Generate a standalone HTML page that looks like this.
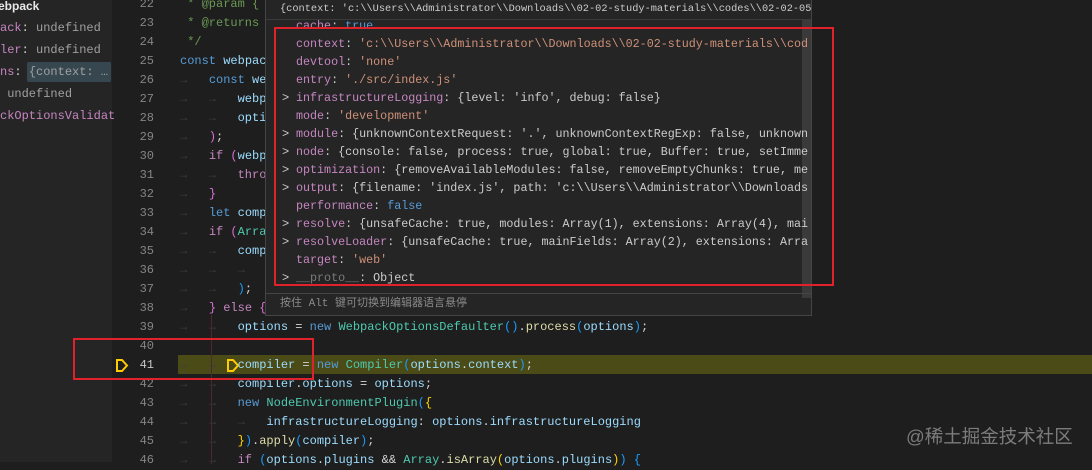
<!DOCTYPE html>
<html><head><meta charset="utf-8"><style>
*{margin:0;padding:0;box-sizing:border-box}
body{width:1092px;height:462px;background:#1e1e1e;overflow:hidden;position:relative;font-family:"Liberation Mono",monospace;font-size:12px;color:#d4d4d4}
.sb{position:absolute;left:0;top:0;width:112px;height:462px;background:#252526}
.sl{position:absolute;left:0;white-space:pre;font-family:"Liberation Mono",monospace;font-size:12px;line-height:20px}
.ln{position:absolute;left:112px;width:42px;text-align:right;color:#858585;line-height:19px;font-size:12px}
.cl{position:absolute;left:180px;white-space:pre;line-height:19px;font-size:12px}
.k{color:#569cd6}.c{color:#c586c0}.v{color:#9cdcfe}.t{color:#4ec9b0}.f{color:#dcdcaa}.g{color:#6a9955}.y{color:#ffd700}.p{color:#da70d6}.b{color:#179fff}.a{color:#3e3e3e}
.pop{position:absolute;left:265px;top:0;width:547px;height:316px;background:#252526;border:1px solid #454545;border-top:none;overflow:hidden}
.pl{position:absolute;left:30px;white-space:pre;font-size:11.7px;line-height:18px;color:#cccccc}
.pk{color:#c586c0}.ps{color:#ce9178}.pb{color:#569cd6}
.chev{position:absolute;left:16px;color:#cccccc;font-size:12px;line-height:18px}
.red{position:absolute;border:2px solid #e0232b}
.code{position:absolute;left:0;top:2px;width:1092px;height:462px}
</style></head><body>
<div class="sb">
<div class="sl" style="top:-4px;left:-2px;color:#e8e8e8;font-family:'Liberation Sans',sans-serif;font-weight:bold;font-size:12px">ebpack</div>
<div class="sl" style="top:18px"><span class="pk">ack</span>: <span style="color:#a0a0a0">undefined</span></div>
<div class="sl" style="top:40px"><span class="pk">ler</span>: <span style="color:#a0a0a0">undefined</span></div>
<div style="position:absolute;left:27px;top:62px;width:84px;height:20px;background:#37474f;border-radius:2px"></div>
<div class="sl" style="top:62px"><span class="pk">ns</span>: <span style="color:#a0a0a0">{context: …</span></div>
<div class="sl" style="top:84px"> <span style="color:#a0a0a0">undefined</span></div>
<div class="sl" style="top:106px"><span class="pk">ckOptionsValidat</span></div>
</div>
<div class="code">
<div style="position:absolute;left:178px;top:353px;width:914px;height:19px;background:#4b4b18"></div>
<div style="position:absolute;left:211px;top:313px;width:1px;height:149px;background:#4a2a2a"></div>

<div class="ln" style="top:-7px">22</div><div class="ln" style="top:12px">23</div><div class="ln" style="top:31px">24</div><div class="ln" style="top:50px">25</div><div class="ln" style="top:69px">26</div><div class="ln" style="top:88px">27</div><div class="ln" style="top:107px">28</div><div class="ln" style="top:126px">29</div><div class="ln" style="top:145px">30</div><div class="ln" style="top:164px">31</div><div class="ln" style="top:183px">32</div><div class="ln" style="top:202px">33</div><div class="ln" style="top:221px">34</div><div class="ln" style="top:240px">35</div><div class="ln" style="top:259px">36</div><div class="ln" style="top:278px">37</div><div class="ln" style="top:297px">38</div><div class="ln" style="top:316px">39</div><div class="ln" style="top:335px">40</div><div class="ln" style="top:354px;color:#c6c6c6">41</div><div class="ln" style="top:373px">42</div><div class="ln" style="top:392px">43</div><div class="ln" style="top:411px">44</div><div class="ln" style="top:430px">45</div><div class="ln" style="top:449px">46</div>

<svg style="position:absolute;left:115px;top:356px" width="14" height="15"><path d="M2 2 H7 L12 7.5 L7 13 H2 Z" fill="none" stroke="#ffcc00" stroke-width="2"/></svg>
<svg style="position:absolute;left:226px;top:356px" width="14" height="15"><path d="M2 2 H7 L12 7.5 L7 13 H2 Z" fill="none" stroke="#ffcc00" stroke-width="2"/></svg>

<div class="cl g" style="top:-7px"> * @param {</div>
<div class="cl g" style="top:12px"> * @returns</div>
<div class="cl g" style="top:31px"> */</div>
<div class="cl" style="top:50px"><span class="k">const</span> <span class="v">webpack</span></div>
<div class="cl" style="top:69px"><span class="a">→   </span><span class="k">const</span> <span class="v">webpackOptionsValidationErrors</span></div>
<div class="cl" style="top:88px"><span class="a">→   →   </span><span class="v">webpackOptionsSchema</span></div>
<div class="cl" style="top:107px"><span class="a">→   →   </span><span class="v">options</span></div>
<div class="cl" style="top:126px"><span class="a">→   </span><span class="p">)</span>;</div>
<div class="cl" style="top:145px"><span class="a">→   </span><span class="c">if</span> <span class="p">(</span><span class="v">webpackOptions</span></div>
<div class="cl" style="top:164px"><span class="a">→   →   </span><span class="c">throw</span></div>
<div class="cl" style="top:183px"><span class="a">→   </span><span class="p">}</span></div>
<div class="cl" style="top:202px"><span class="a">→   </span><span class="k">let</span> <span class="v">compiler</span>;</div>
<div class="cl" style="top:221px"><span class="a">→   </span><span class="c">if</span> <span class="p">(</span><span class="t">Array</span></div>
<div class="cl" style="top:240px"><span class="a">→   →   </span><span class="v">compiler</span></div>
<div class="cl" style="top:259px"><span class="a">→   →   →</span></div>
<div class="cl" style="top:278px"><span class="a">→   →   </span><span class="b">)</span>;</div>
<div class="cl" style="top:297px"><span class="a">→   </span><span class="p">}</span> <span class="c">else</span> <span class="p">{</span></div>
<div class="cl" style="top:316px"><span class="a">→   →   </span><span class="v">options</span> = <span class="k">new</span> <span class="t">WebpackOptionsDefaulter</span><span class="b">()</span>.<span class="f">process</span><span class="b">(</span><span class="v">options</span><span class="b">)</span>;</div>
<div class="cl" style="top:354px"><span class="a">→   →   </span><span class="v">compiler</span> = <span class="k">new</span> <span class="t">Compiler</span><span class="b">(</span><span class="v">options</span>.<span class="v">context</span><span class="b">)</span>;</div>
<div class="cl" style="top:373px"><span class="a">→   →   </span><span class="v">compiler</span>.<span class="v">options</span> = <span class="v">options</span>;</div>
<div class="cl" style="top:392px"><span class="a">→   →   </span><span class="k">new</span> <span class="t">NodeEnvironmentPlugin</span><span class="b">(</span><span class="y">{</span></div>
<div class="cl" style="top:411px"><span class="a">→   →   →   </span><span class="v">infrastructureLogging</span>: <span class="v">options</span>.<span class="v">infrastructureLogging</span></div>
<div class="cl" style="top:430px"><span class="a">→   →   </span><span class="y">}</span><span class="b">)</span>.<span class="f">apply</span><span class="b">(</span><span class="v">compiler</span><span class="b">)</span>;</div>
<div class="cl" style="top:449px"><span class="a">→   →   </span><span class="c">if</span> <span class="b">(</span><span class="v">options</span>.<span class="v">plugins</span> &amp;&amp; <span class="t">Array</span>.<span class="f">isArray</span><span class="y">(</span><span class="v">options</span>.<span class="v">plugins</span><span class="y">)</span><span class="b">)</span> <span class="b">{</span></div>
</div>

<div class="pop">
<div class="pl" style="left:14px;top:0px;color:#cccccc;font-size:10.3px">{context: 'c:\\Users\\Administrator\\Downloads\\02-02-study-materials\\codes\\02-02-05-…</div>
<div style="position:absolute;left:0;top:19px;width:547px;height:1px;background:#3a3a3a"></div>
<div style="position:absolute;left:536px;top:20px;width:10px;height:278px;background:#3a3a3a"></div>
<div class="pl" style="top:17px"><span class="pk">cache</span>: <span class="pb">true</span></div>
<div class="pl" style="top:35px"><span class="pk">context</span>: <span class="ps">'c:\\Users\\Administrator\\Downloads\\02-02-study-materials\\cod</span></div>
<div class="pl" style="top:53px"><span class="pk">devtool</span>: <span class="ps">'none'</span></div>
<div class="pl" style="top:71px"><span class="pk">entry</span>: <span class="ps">'./src/index.js'</span></div>
<div class="chev" style="top:89px">&gt;</div><div class="pl" style="top:89px"><span class="pk">infrastructureLogging</span>: {level: 'info', debug: false}</div>
<div class="pl" style="top:107px"><span class="pk">mode</span>: <span class="ps">'development'</span></div>
<div class="chev" style="top:125px">&gt;</div><div class="pl" style="top:125px"><span class="pk">module</span>: {unknownContextRequest: '.', unknownContextRegExp: false, unknown</div>
<div class="chev" style="top:143px">&gt;</div><div class="pl" style="top:143px"><span class="pk">node</span>: {console: false, process: true, global: true, Buffer: true, setImme</div>
<div class="chev" style="top:161px">&gt;</div><div class="pl" style="top:161px"><span class="pk">optimization</span>: {removeAvailableModules: false, removeEmptyChunks: true, me</div>
<div class="chev" style="top:179px">&gt;</div><div class="pl" style="top:179px"><span class="pk">output</span>: {filename: 'index.js', path: 'c:\\Users\\Administrator\\Downloads</div>
<div class="pl" style="top:197px"><span class="pk">performance</span>: <span class="pb">false</span></div>
<div class="chev" style="top:215px">&gt;</div><div class="pl" style="top:215px"><span class="pk">resolve</span>: {unsafeCache: true, modules: Array(1), extensions: Array(4), mai</div>
<div class="chev" style="top:233px">&gt;</div><div class="pl" style="top:233px"><span class="pk">resolveLoader</span>: {unsafeCache: true, mainFields: Array(2), extensions: Arra</div>
<div class="pl" style="top:251px"><span class="pk">target</span>: <span class="ps">'web'</span></div>
<div class="chev" style="top:269px">&gt;</div><div class="pl" style="top:269px"><span style="color:#7a7a7a">__proto__</span>: Object</div>
<div style="position:absolute;left:0;top:293px;width:547px;height:1px;background:#454545"></div>
<div class="pl" style="left:14px;top:295px;color:#8a8a8a;font-family:'Liberation Mono','Noto Sans CJK SC',monospace;font-size:11px">按住 Alt 键可切换到编辑器语言悬停</div>
</div>

<div class="red" style="left:274px;top:27px;width:560px;height:259px"></div>
<div class="red" style="left:73px;top:338px;width:241px;height:42px"></div>
<div style="position:absolute;left:906px;top:423px;color:#7c7c7c;font-family:'Liberation Sans','Noto Sans CJK SC',sans-serif;font-size:18.5px">@稀土掘金技术社区</div>
</body></html>
